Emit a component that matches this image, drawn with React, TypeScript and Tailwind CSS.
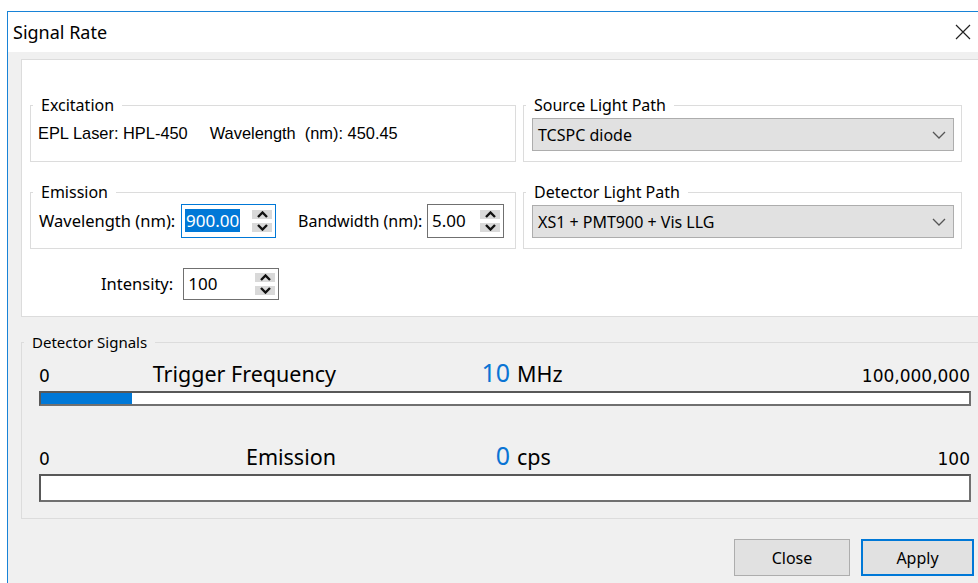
import React from "react";

const sans = { fontFamily: '"Noto Sans", "Open Sans", sans-serif' };
const arial = { fontFamily: '"Liberation Sans", Arial, sans-serif' };
const verdana = { fontFamily: '"DejaVu Sans", Verdana, sans-serif' };

function Caret({ up }: { up?: boolean }) {
  return (
    <svg width="11" height="7" viewBox="0 0 11 7">
      <path
        d={up ? "M1 6 L5.5 1.5 L10 6" : "M1 1 L5.5 5.5 L10 1"}
        fill="none"
        stroke="#111"
        strokeWidth="2.4"
      />
    </svg>
  );
}

function Spin() {
  return (
    <div className="flex flex-col gap-[4px]">
      <div className="w-[20px] h-[9px] bg-[#d9d9d9] flex items-center justify-center">
        <Caret up />
      </div>
      <div className="w-[20px] h-[9px] bg-[#d9d9d9] flex items-center justify-center">
        <Caret />
      </div>
    </div>
  );
}

function NumberBox({
  value,
  width,
  height,
  focused,
}: {
  value: string;
  width: string;
  height: string;
  focused?: boolean;
}) {
  return (
    <div
      className={`${width} ${height} shrink-0 flex items-center bg-white pl-[3px] pr-[3px] border ${
        focused ? "border-[#0078d7]" : "border-[#707070]"
      }`}
    >
      <div className="flex-1 min-w-0">
        <span
          className={`text-[17px] leading-[21px] px-[1px] ${
            focused ? "bg-[#0078d7] text-white" : "text-black"
          }`}
        >
          {value}
        </span>
      </div>
      <Spin />
    </div>
  );
}

function Combo({ value }: { value: string }) {
  return (
    <div className="h-[33px] bg-[#e1e1e1] border border-[#adadad] flex items-center pl-[5px] pr-[7px]">
      <span className="flex-1 text-[16px] text-black">{value}</span>
      <svg width="14" height="8" viewBox="0 0 14 8">
        <path d="M1 1 L7 7 L13 1" fill="none" stroke="#555" strokeWidth="1.3" />
      </svg>
    </div>
  );
}

function Group({
  title,
  children,
  className = "",
}: {
  title: string;
  children: React.ReactNode;
  className?: string;
}) {
  return (
    <fieldset className={`border border-[#dcdcdc] p-0 min-w-0 ${className}`}>
      <legend className="ml-[2px] px-[8px] text-[16px] leading-[20px] text-black">
        {title}
      </legend>
      {children}
    </fieldset>
  );
}

function Meter({
  label,
  value,
  unit,
  max,
  fill,
  barHeight,
}: {
  label: string;
  value: string;
  unit: string;
  max: string;
  fill: number;
  barHeight: string;
}) {
  return (
    <div className="w-[932px]">
      <div className="flex items-baseline text-black">
        <div className="w-[297px] flex items-baseline justify-between">
          <span className="text-[17px] leading-none" style={verdana}>
            0
          </span>
          <span className="text-[21.5px] leading-none">{label}</span>
        </div>
        <span className="w-[174px] text-right text-[25px] leading-none text-[#0a74d4]">
          {value}
        </span>
        <span className="ml-[7px] text-[21.5px] leading-none">{unit}</span>
        <span className="ml-auto pr-[1px] text-[17px] leading-none" style={verdana}>
          {max}
        </span>
      </div>
      <div
        className={`mt-[6px] ${barHeight} bg-white border-2 border-[#585858] border-b-[#707070] border-r-[#707070]`}
      >
        <div className="h-full bg-[#0078d7]" style={{ width: `${fill}px` }} />
      </div>
    </div>
  );
}

export default function App() {
  return (
    <div
      className="w-[978px] h-[583px] bg-white overflow-hidden pl-[7px] pt-[11px]"
      style={sans}
    >
      <div className="w-[993px] h-[600px] border-l border-t border-[#1883d7] flex flex-col">
        {/* caption */}
        <div className="h-[40px] bg-white flex items-center pl-[5px] shrink-0">
          <span className="text-[18px] text-black">Signal Rate</span>
          <div className="ml-auto mr-[14px] w-[46px] h-[40px] flex items-center justify-center">
            <svg width="16" height="16" viewBox="0 0 16 16">
              <path d="M1 1 L15 15 M15 1 L1 15" stroke="#222" strokeWidth="1.2" />
            </svg>
          </div>
        </div>

        {/* client area */}
        <div className="flex-1 bg-[#f0f0f0] pt-[7px] pl-[13px]">
          <div className="w-[964px] bg-white border border-[#dcdcdc] pt-[35px] pl-[8px] pb-[16px]">
            <div className="grid grid-cols-[486px_439px] gap-x-[7px] gap-y-[20px]">
              <Group title="Excitation">
                <div
                  className="h-[46px] pt-[8px] pl-[7px] text-[16.4px] leading-[20px] text-black whitespace-pre"
                  style={arial}
                >
                  <span>EPL Laser: HPL-450</span>
                  <span className="ml-[22px]">Wavelength  (nm): 450.45</span>
                </div>
              </Group>
              <Group title="Source Light Path">
                <div className="h-[46px] pt-[3px] pl-[8px] pr-[7px]">
                  <Combo value="TCSPC diode" />
                </div>
              </Group>
              <Group title="Emission">
                <div className="h-[46px] pt-[2px] pl-[8px] flex items-start text-black whitespace-nowrap">
                  <span className="w-[142px] h-[34px] flex items-center text-[16.5px]">
                    Wavelength (nm):
                  </span>
                  <NumberBox value="900.00" width="w-[95px]" height="h-[34px]" focused />
                  <span className="ml-[22px] w-[129px] h-[34px] flex items-center text-[16px]">
                    Bandwidth (nm):
                  </span>
                  <NumberBox value="5.00" width="w-[77px]" height="h-[34px]" />
                </div>
              </Group>
              <Group title="Detector Light Path">
                <div className="h-[46px] pt-[3px] pl-[8px] pr-[7px]">
                  <Combo value="XS1 + PMT900 + Vis LLG" />
                </div>
              </Group>
            </div>
            <div className="mt-[19px] pl-[71px] flex items-center text-[16.5px] text-black">
              <span>Intensity:</span>
              <div className="ml-[10px]">
                <NumberBox value="100" width="w-[96px]" height="h-[32px]" />
              </div>
            </div>
          </div>

          <fieldset className="mt-[15px] w-[964px] border border-[#dcdcdc] p-0 min-w-0">
            <legend className="ml-[2px] px-[8px] text-[15px] leading-[20px] text-black">
              Detector Signals
            </legend>
            <div className="pl-[17px] pt-[8px] pb-[16px]">
              <Meter
                label="Trigger Frequency"
                value="10"
                unit="MHz"
                max="100,000,000"
                fill={91}
                barHeight="h-[15px]"
              />
              <div className="mt-[37px]">
                <Meter
                  label="Emission"
                  value="0"
                  unit="cps"
                  max="100"
                  fill={0}
                  barHeight="h-[28px]"
                />
              </div>
            </div>
          </fieldset>

          <div className="mt-[20px] w-[953px] flex justify-end gap-[11px] text-[16px] text-black">
            <button className="w-[116px] h-[37px] bg-[#e1e1e1] border border-[#adadad]">
              Close
            </button>
            <button className="w-[113px] h-[37px] bg-[#e1e1e1] border-2 border-[#0078d7]">
              Apply
            </button>
          </div>
        </div>
      </div>
    </div>
  );
}
